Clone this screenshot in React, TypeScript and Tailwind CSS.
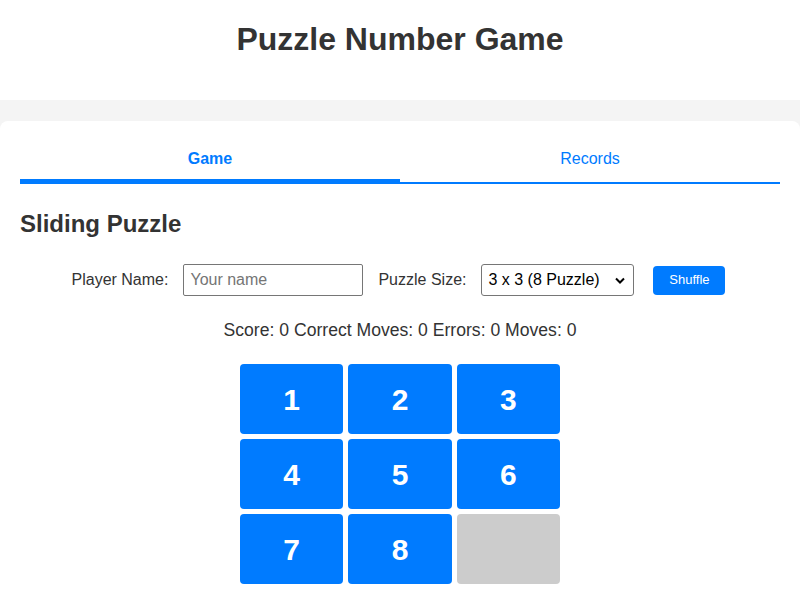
import { useState } from "react";

const tiles = [1, 2, 3, 4, 5, 6, 7, 8, 0];

const App = () => {
  const [tab, setTab] = useState("game");
  const [name, setName] = useState("");
  const [size, setSize] = useState("3");

  return (
    <div
      className="min-h-[600px] bg-[#f4f4f4] text-[#333]"
      style={{ fontFamily: '"Liberation Sans", Arial, sans-serif' }}
    >
      {/* Header */}
      <header className="h-[100px] bg-white pt-[21px] text-center">
        <h1 className="text-[32px] font-bold leading-[37px]">Puzzle Number Game</h1>
      </header>

      {/* Card */}
      <main className="mt-[21px] rounded-t-lg bg-white px-5 pt-5 pb-5">
        {/* Tabs */}
        <div className="flex border-b-2 border-[#007bff]">
          <button
            onClick={() => setTab("game")}
            className={`h-[41px] flex-1 border-b-[3px] pb-[2px] text-[16px] leading-[18px] text-[#007bff] ${
              tab === "game" ? "border-[#007bff] font-bold" : "border-transparent"
            }`}
          >
            Game
          </button>
          <button
            onClick={() => setTab("records")}
            className={`h-[41px] flex-1 border-b-[3px] pb-[2px] text-[16px] leading-[18px] text-[#007bff] ${
              tab === "records" ? "border-[#007bff] font-bold" : "border-transparent"
            }`}
          >
            Records
          </button>
        </div>

        <h2 className="mt-[26px] text-[24px] font-bold leading-[28px]">Sliding Puzzle</h2>

        {/* Controls */}
        <div className="mt-[26px] flex items-center justify-center pr-[3px] text-[16px]">
          <label htmlFor="player" className="mr-[15px]">
            Player Name:
          </label>
          <input
            id="player"
            value={name}
            onChange={(e) => setName(e.target.value)}
            placeholder="Your name"
            className="mr-[15px] h-[32px] w-[180px] rounded-[2px] border border-[#767676] px-[6px] text-[16px] placeholder:text-[#757575] focus:outline-none"
          />
          <label htmlFor="size" className="mr-[15px]">
            Puzzle Size:
          </label>
          <div className="relative mr-[19px]">
            <select
              id="size"
              value={size}
              onChange={(e) => setSize(e.target.value)}
              className="h-[32px] w-[153px] appearance-none rounded-[3px] border border-[#767676] bg-white pl-[6px] text-[16px] text-black focus:outline-none"
            >
              <option value="3">3 x 3 (8 Puzzle)</option>
              <option value="4">4 x 4 (15 Puzzle)</option>
              <option value="5">5 x 5 (24 Puzzle)</option>
            </select>
            <svg
              className="pointer-events-none absolute top-[13px] right-[9px]"
              width="10"
              height="7"
              viewBox="0 0 10 7"
            >
              <path d="M1 1.5 L5 5.5 L9 1.5" fill="none" stroke="#000" strokeWidth="2" />
            </svg>
          </div>
          <button className="h-[29px] w-[72px] rounded-[4px] bg-[#007bff] text-[13px] text-white">
            Shuffle
          </button>
        </div>

        <p className="mt-[24px] text-center text-[17.6px] leading-[20px]">
          Score: 0 Correct Moves: 0 Errors: 0 Moves: 0
        </p>

        {/* Board */}
        <div className="mx-auto mt-[24px] grid w-[320px] grid-cols-3 gap-[5px]">
          {tiles.map((t) =>
            t === 0 ? (
              <div key={t} className="h-[70px] rounded-[4px] bg-[#ccc]" />
            ) : (
              <div
                key={t}
                className="flex h-[70px] items-center justify-center rounded-[4px] bg-[#007bff] text-[30px] font-bold text-white"
              >
                {t}
              </div>
            )
          )}
        </div>
      </main>
    </div>
  );
};

export default App;
